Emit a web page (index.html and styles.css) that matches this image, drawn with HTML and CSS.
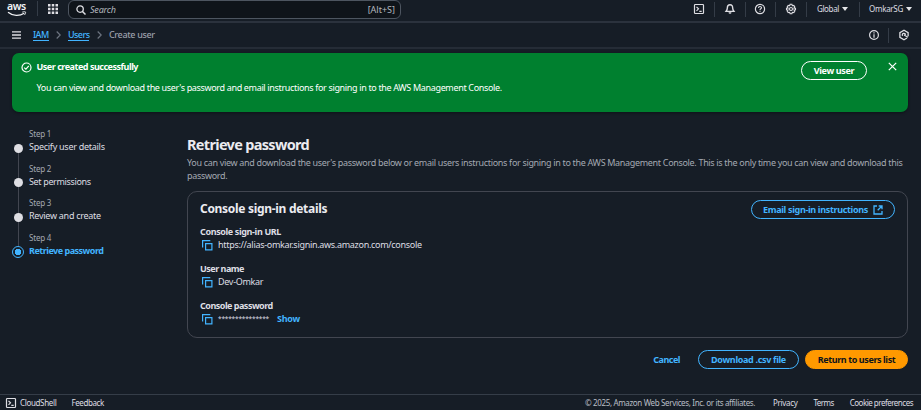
FILE: index.html
```html
<!DOCTYPE html>
<html lang="en">
<head>
<meta charset="utf-8">
<title>Create user | IAM</title>
<link rel="stylesheet" href="styles.css">
</head>
<body>
<svg width="0" height="0" class="defs">
  <symbol id="copy" viewBox="0 0 12 12"><path d="M1.600 8.500V1.600h7.700M4.600 4.600h6.300v6.300H4.600z" fill="none" stroke="currentColor" stroke-width="1.200"/></symbol>
  <symbol id="shell" viewBox="0 0 12 12"><rect x="1.500" y="1.500" width="9" height="9" rx=".8" fill="none" stroke="currentColor" stroke-width="1.200"/><path d="M3.500 3.800l2 2-2 2M6.300 8.300h2.400" fill="none" stroke="currentColor" stroke-width="1.200"/></symbol>
</svg>
<header class="topbar">
  <div class="logo">
    <span>aws</span>
    <svg viewBox="0 0 20 6"><path d="M1 1.200C6 5.200 12.500 5.200 17.200 2.200" fill="none" stroke="currentColor" stroke-width="1.300"/><path d="M15.300 1.100c1.700-.5 3.200-.4 3.300 0 .1.700-.4 2-1.200 2.900" fill="none" stroke="currentColor"/></svg>
  </div>
  <i class="rule"></i>
  <svg class="apps" viewBox="0 0 10 10"><path d="M0 0h2.500v2.500H0zM3.750 0h2.500v2.500h-2.500zM7.500 0H10v2.500H7.500zM0 3.750h2.500v2.500H0zM3.750 3.750h2.500v2.500h-2.500zM7.500 3.750H10v2.500H7.500zM0 7.500h2.500V10H0zM3.750 7.500h2.500V10h-2.500zM7.500 7.500H10V10H7.500z"/></svg>
  <div class="search">
    <svg viewBox="0 0 10 10"><circle cx="4.100" cy="4.100" r="3.200" fill="none" stroke="currentColor" stroke-width="1.300"/><path d="M6.500 6.500l3 3" stroke="currentColor" stroke-width="1.500"/></svg>
    <em>Search</em><kbd>[Alt+S]</kbd>
  </div>
  <div class="tools">
    <svg class="tool"><use href="#shell"/></svg>
    <i class="rule"></i>
    <svg class="tool" viewBox="0 0 12 12"><path d="M6 1.700C4 1.700 3.400 3.200 3.400 4.600c0 2-.6 2.700-1.400 3.800h8C9.200 7.300 8.600 6.600 8.600 4.600 8.600 3.200 8 1.700 6 1.700z" fill="none" stroke="currentColor" stroke-width="1.400"/><path d="M4.500 9.200h3a1.500 1.500 0 0 1-3 0z"/></svg>
    <i class="rule"></i>
    <svg class="tool" viewBox="0 0 12 12"><circle cx="6" cy="6" r="4.600" fill="none" stroke="currentColor" stroke-width="1.200"/><path d="M4.500 5c0-2 3-1.900 3-.2 0 1-1.500 1-1.500 2.100M6 7.700v1.100" fill="none" stroke="currentColor" stroke-width="1.100"/></svg>
    <i class="rule"></i>
    <svg class="tool" viewBox="0 0 12 12"><path d="M5.100 1.300h1.800l.4 1.400 1.500-.3 1 1.600-.9 1 1.600.2v1.600l-1.600.2.9 1-1 1.600-1.500-.3-.4 1.400H5.100l-.4-1.400-1.500.3-1-1.600.9-1-1.600-.2V5.200L3.100 5l-.9-1 1-1.600 1.500.3z" fill="none" stroke="currentColor" stroke-width="1.100"/><circle cx="6" cy="6" r="1.500" fill="none" stroke="currentColor" stroke-width="1.100"/></svg>
    <i class="rule"></i>
    <span class="region">Global</span><b class="caret"></b>
    <i class="rule account-rule"></i>
    <span class="account">OmkarSG</span><b class="caret"></b>
  </div>
</header>
<nav class="crumbs">
  <svg class="burger" viewBox="0 0 9 8"><path d="M0 .8h9M0 4h9M0 7.200h9" stroke="currentColor" stroke-width="1.300"/></svg>
  <a class="iam">IAM</a>
  <svg class="chev" viewBox="0 0 5 8"><path d="M.7.5L4.200 4 .7 7.500" fill="none" stroke="currentColor" stroke-width="1.200"/></svg>
  <a class="users">Users</a>
  <svg class="chev" viewBox="0 0 5 8"><path d="M.7.500L4.200 4 .7 7.500" fill="none" stroke="currentColor" stroke-width="1.200"/></svg>
  <span class="here">Create user</span>
  <svg class="tool info" viewBox="0 0 12 12"><circle cx="6" cy="6" r="4.400" fill="none" stroke="currentColor" stroke-width="1.200"/><path d="M6 3.300v1.100M6 5.200v3.500" stroke="currentColor" stroke-width="1.200"/></svg>
  <i class="rule"></i>
  <svg class="tool" viewBox="0 0 12 12"><path d="M9 9L6 10.700 1.900 8.350V3.650L6 1.300l4.100 2.350v3.500" fill="none" stroke="currentColor" stroke-width="1.300"/><path d="M4.600 6.900A1.600 1.600 0 1 1 7.500 5.900M6 6l4 2.200" fill="none" stroke="currentColor" stroke-width="1.300"/></svg>
</nav>
<section class="flash">
  <svg class="ok" viewBox="0 0 11 11"><circle cx="5.500" cy="5.500" r="4.500" fill="none" stroke="currentColor" stroke-width="1.200"/><path d="M3.200 5.600l1.700 1.600 2.900-3.300" fill="none" stroke="currentColor" stroke-width="1.200"/></svg>
  <div class="flash-text">
    <h2>User created successfully</h2>
    <p>You can view and download the user's password and email instructions for signing in to the AWS Management Console.</p>
  </div>
  <button class="btn view"><span>View user</span></button>
  <svg class="close" viewBox="0 0 9 9"><path d="M.8.8l7.400 7.400M8.200.8L.8 8.200" stroke="currentColor" stroke-width="1.200"/></svg>
</section>
<div class="layout">
  <ol class="steps">
    <li><i class="dot"></i><small>Step 1</small><span class="s1">Specify user details</span></li>
    <li><i class="dot"></i><small>Step 2</small><span class="s2">Set permissions</span></li>
    <li><i class="dot"></i><small>Step 3</small><span class="s3">Review and create</span></li>
    <li class="current"><i class="dot"></i><small>Step 4</small><span class="s4">Retrieve password</span></li>
  </ol>
  <main>
    <h1>Retrieve password</h1>
    <p class="lead">You can view and download the user's password below or email users instructions for signing in to the AWS Management Console. This is the only time you can view and download this<br>password.</p>
    <section class="card">
      <div class="card-head">
        <h2>Console sign-in details</h2>
        <button class="btn email"><span>Email sign-in instructions</span><svg viewBox="0 0 10 10"><path d="M4 1H1v8h8V6M5.700 1H9v3.300M9 1L4.700 5.300" fill="none" stroke="currentColor" stroke-width="1.300"/></svg></button>
      </div>
      <dl>
        <dt class="k1">Console sign-in URL</dt><dd><svg><use href="#copy"/></svg><span class="url">https://alias-omkar.signin.aws.amazon.com/console</span></dd>
        <dt class="k2">User name</dt><dd><svg><use href="#copy"/></svg><span class="name">Dev-Omkar</span></dd>
        <dt class="k3">Console password</dt><dd><svg><use href="#copy"/></svg><span class="secret">***************</span><a class="show">Show</a></dd>
      </dl>
    </section>
    <div class="actions">
      <a class="cancel">Cancel</a>
      <button class="btn csv"><span>Download .csv file</span></button>
      <button class="btn primary"><span>Return to users list</span></button>
    </div>
  </main>
</div>
<footer>
  <svg class="tool"><use href="#shell"/></svg>
  <span class="cloud">CloudShell</span>
  <span class="feedback">Feedback</span>
  <span class="legal">© 2025, Amazon Web Services, Inc. or its affiliates.</span>
  <span class="privacy">Privacy</span>
  <span class="terms">Terms</span>
  <span class="cookies">Cookie preferences</span>
</footer>
</body>
</html>
```
FILE: styles.css
```css
* { box-sizing: border-box; margin: 0; padding: 0; }
body {
  width: 921px; height: 410px; overflow: hidden;
  display: flex; flex-direction: column;
  background: #161d26; color: #dedee3;
  font: 9px/12px "Noto Sans", "Open Sans", sans-serif;
  letter-spacing: -0.34px;
}
svg { flex: none; fill: currentColor; }
span, a, h1, h2, dt, em, kbd { white-space: nowrap; }
.defs { display: none; }
.tool { width: 12px; height: 12px; }
.rule { flex: none; width: 1px; height: 15px; background: #343c47; }

.topbar { height: 23px; flex: none; display: flex; align-items: center; padding: 0 9px 4px 7px; border-bottom: 2px solid #2b323d; }
.logo { width: 20px; height: 17px; margin-right: 10px; color: #f1f2f4; }
.logo span { display: block; height: 11px; font: 600 10.5px/12px "Noto Sans", sans-serif; letter-spacing: -0.4px; }
.logo svg { display: block; width: 20px; height: 6px; }
.apps { width: 10px; height: 10px; margin: 1px 10px 0 10px; }
.search { width: 333px; height: 19px; margin-top: 2px; display: flex; align-items: center; padding: 0 5px 0 7px; border: 1px solid #4d5560; border-radius: 6px; background: #0f141a; }
.search svg { width: 10px; height: 10px; }
.search em { margin-left: 4px; color: #b4b8bf; letter-spacing: -0.200px; }
.search kbd { margin-left: auto; font: inherit; color: #b4b8bf; letter-spacing: 0; }
.tools { margin-left: auto; display: flex; align-items: center; font-size: 8px; padding-top: 1px; }
.tools .rule { margin: 0 8.500px 0 9.100px; }
.caret { width: 0; height: 0; border: 3px solid transparent; border-top: 4.500px solid #e4e5e8; border-bottom: 0; margin-left: 3px; }
.tools .account-rule { margin: 0 9.500px 0 10.500px; }
.region { margin-left: 1.500px; }
.account { letter-spacing: -0.300px; }

.crumbs { height: 26px; flex: none; display: flex; align-items: center; padding: 0 11px 0 12px; border-bottom: 2px solid #252c36; }
.burger { width: 9px; height: 8px; margin-right: 12px; }
.crumbs a { color: #42b4ff; height: 12px; border-bottom: 1px solid #42b4ff; line-height: 11px; font-weight: 500; letter-spacing: -0.600px; }
.chev { width: 5px; height: 8px; margin: 0 7px 0 7.500px; color: #6d7580; }
.here { color: #9a9fa9; font-weight: 500; }
.info { margin-left: auto; }
.crumbs .rule { margin: 0 9px 0 8px; }

.flash { position: relative; height: 59px; flex: none; margin: 4px 13px 0 12px; padding: 8px 11px 0 9px; display: flex; align-items: flex-start; border-radius: 7px; background: #00802f; color: #fff; box-shadow: 0 1px 3px #0006; }
.ok { width: 11px; height: 11px; margin: 1px 4.500px 0 0; }
.flash h2 { font-size: 9px; line-height: 12px; letter-spacing: -0.480px; }
.flash p { margin-top: 9px; line-height: 12px; white-space: nowrap; }
.close { width: 9px; height: 9px; margin: 1px 0 0 21px; }
.btn { height: 19px; flex: none; display: flex; align-items: center; justify-content: center; border: 1px solid currentColor; border-radius: 10px; background: none; color: #42b4ff; font: bold 9px/12px "Noto Sans", sans-serif; letter-spacing: -0.330px; }
.view { width: 66px; margin-left: auto; color: #fff; }

.layout { display: flex; flex: 1; }
.steps { width: 187px; flex: none; padding: 16px 0 0 12px; list-style: none; }
.steps li { position: relative; height: 34.500px; padding-left: 17px; }
.steps li::before { content: ""; position: absolute; left: 5.500px; top: 20px; width: 1px; height: 34px; background: #424650; }
.steps li:last-child::before { display: none; }
.steps small { display: block; font-size: 8px; line-height: 12px; color: #a4a9b2; letter-spacing: -0.200px; }
.steps span { display: block; line-height: 13px; letter-spacing: -0.270px; }
.steps .s2 { letter-spacing: -0.350px; }
.dot { position: absolute; left: 1.500px; top: 15.500px; width: 9px; height: 9px; border-radius: 50%; background: #dedee3; }
.current .dot { left: 0; top: 14px; width: 12px; height: 12px; border: 1px solid #42b4ff; background: radial-gradient(circle, #42b4ff 3px, #161d26 3.500px); }
.steps .current span { color: #42b4ff; font-weight: bold; letter-spacing: -0.500px; }

main { width: 721px; flex: none; padding-top: 24px; }
h1 { font-size: 14.500px; line-height: 17px; height: 18px; color: #ebebf0; letter-spacing: -0.680px; }
.lead { margin-top: 3px; white-space: nowrap; line-height: 12.500px; color: #a4a9b2; letter-spacing: -0.325px; }
.card { height: 147px; margin-top: 9px; padding: 8px 12px 0 12px; border: 1px solid #424650; border-radius: 10px; }
.card-head { display: flex; justify-content: space-between; height: 19px; }
.card h2 { font-size: 12px; line-height: 17px; color: #ebebf0; letter-spacing: -0.300px; }
.email { width: 144px; }
.email svg { width: 10px; height: 10px; margin-left: 5px; }
dl { margin-top: 7px; }
dt { font-weight: bold; height: 12px; letter-spacing: -0.500px; }
.k1 { letter-spacing: -0.370px; }
dd { height: 13px; margin-bottom: 12px; display: flex; align-items: center; }
dd svg { width: 12px; height: 12px; margin: 0 5px 0 1px; color: #42b4ff; }
dd span { line-height: 11px; height: 12px; letter-spacing: -0.300px; }
dd .secret { font-size: 6.500px; letter-spacing: -0.180px; width: 52px; }
.show { margin-left: 7px; color: #42b4ff; font-weight: bold; line-height: 11px; height: 12px; letter-spacing: -0.250px; }
.actions { display: flex; justify-content: flex-end; align-items: center; margin-top: 12px; }
.cancel { color: #42b4ff; font-weight: bold; margin-right: 18px; letter-spacing: -0.500px; }
.csv { width: 101px; margin-right: 6px; }
.primary { width: 103px; border-color: #ff9900; background: #ff9900; color: #0f141a; letter-spacing: -0.400px; }

footer { height: 16px; flex: none; display: flex; align-items: center; padding: 1px 8px 0 5px; border-top: 1px solid #353d48; font-size: 8px; }
.cloud { margin-left: 3px; }
.feedback { margin-left: 15px; letter-spacing: -0.400px; }
.legal { margin-left: auto; color: #b9bdc5; letter-spacing: -0.350px; }
.privacy { margin-left: 18px; }
.terms { margin-left: 16px; letter-spacing: -0.550px; }
.cookies { margin-left: 16px; letter-spacing: -0.500px; }
```
